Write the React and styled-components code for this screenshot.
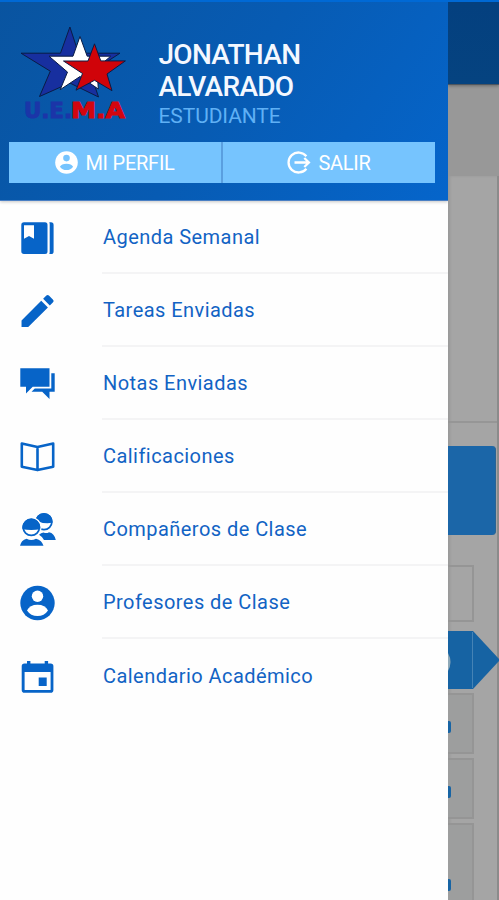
import React from "react";
import styled, { createGlobalStyle } from "styled-components";

const GlobalStyle = createGlobalStyle`
  * {
    box-sizing: border-box;
  }
  body {
    margin: 0;
    font-family: Roboto, "Liberation Sans", sans-serif;
  }
`;

const Screen = styled.div`
  width: 499px;
  height: 900px;
  display: flex;
  overflow: hidden;
  border-top: 2px solid #0069d5;
  background: #a5a5a5;
`;

const Drawer = styled.aside`
  width: 448px;
  flex-shrink: 0;
  display: flex;
  flex-direction: column;
  background: #fefefe;
`;

const Header = styled.header`
  height: 199px;
  padding: 0 13px 0 9px;
  background: linear-gradient(125deg, #0954a0 0%, #075bb3 50%, #0565cb 100%);
  border-bottom: 1px solid #4a7fc4;
  box-shadow: 0 1px 3px rgba(0, 0, 0, 0.22);
`;

const Profile = styled.div`
  height: 140px;
  display: flex;
`;

const Logo = styled.svg`
  width: 130px;
  height: 125px;
  margin-right: 19.5px;
`;

const Identity = styled.div`
  padding-top: 37px;
`;

const Name = styled.h1`
  margin: 0;
  font-size: 28px;
  font-weight: 500;
  line-height: 32px;
  color: #f4f8ff;
  letter-spacing: -0.7px;
`;

const Role = styled.div`
  font-size: 21px;
  line-height: 26px;
  letter-spacing: -0.1px;
  color: #5fb0f5;
`;

const Actions = styled.div`
  height: 41px;
  display: flex;
`;

const ActionButton = styled.button`
  flex: 1;
  display: flex;
  align-items: center;
  justify-content: center;
  gap: 7px;
  padding: 0;
  border: 0;
  border-right: ${(props) => (props.$divided ? "2px solid #5a9fdf" : "0")};
  background: #76c4fe;
  color: #fff;
  font-family: inherit;
  font-size: 20px;
  letter-spacing: -0.25px;
`;

const Menu = styled.nav`
  display: flex;
  flex-direction: column;
`;

const MenuItem = styled.a`
  height: 73px;
  display: flex;
  padding-left: 18px;
  color: #1263c4;
`;

const MenuIcon = styled.svg`
  width: 40px;
  height: 40px;
  margin: 16px 44px 0 0;
  overflow: visible;
  fill: #0764c8;
`;

const MenuLabel = styled.span`
  flex: 1;
  padding-left: 1px;
  border-bottom: ${(props) => (props.$last ? "0" : "2px solid #f4f4f5")};
  font-size: 20px;
  line-height: ${(props) => (props.$last ? 74 : 72)}px;
  letter-spacing: 0.45px;
`;

const Page = styled.main`
  flex: 1;
  min-width: 0;
  display: flex;
  flex-direction: column;
  background: #989898;
  overflow: hidden;
`;

const AppBar = styled.div`
  height: 83px;
  flex-shrink: 0;
  background: linear-gradient(#04407f, #054380);
  border-bottom: 1px solid #4e565f;
  box-shadow: 0 1px 3px rgba(0, 0, 0, 0.3);
`;

const PageBody = styled.div`
  flex: 1;
  width: 51px;
  margin-top: 91px;
  display: flex;
  flex-direction: column;
  background: #a5a5a5;
  border-right: 2px solid #8b8b8b;
  box-shadow: inset 2px 0 3px rgba(0, 0, 0, 0.08);
`;

const Banner = styled.div`
  height: 247px;
  flex-shrink: 0;
  border-bottom: 2px solid #969696;
`;

const Card = styled.div`
  height: 89px;
  flex-shrink: 0;
  margin: 23px 1px 30px 0;
  border-radius: 0 4px 4px 0;
  background: #1b66a8;
  border-right: 1px solid #2b6391;
`;

const Box = styled.div`
  width: 26px;
  height: ${(props) => props.$height}px;
  margin-bottom: ${(props) => props.$gap}px;
  padding-top: ${(props) => props.$dot || 0}px;
  flex-shrink: 0;
  border: 2px solid #959595;
  border-left: 0;
  background: ${(props) => (props.$filled ? "#9d9e9e" : "transparent")};
`;

const Dot = styled.div`
  width: 3px;
  height: 12px;
  border-radius: 0 2px 2px 0;
  background: #1764a4;
`;

const Arrow = styled.svg`
  width: 51px;
  height: 58px;
  margin-bottom: 4px;
  flex-shrink: 0;
`;

const items = [
  {
    label: "Agenda Semanal",
    icon: (
      <>
        <path
          fillRule="evenodd"
          d="M6 5.3h21a2.5 2.5 0 0 1 2.5 2.5v26.7a2.5 2.5 0 0 1-2.5 2.5H6a2.7 2.7 0 0 1-2.7-2.7V8A2.7 2.7 0 0 1 6 5.3zM6 8.3v13.5l5-2.8 5 2.8V8.3z"
        />
        <path d="M31.3 5.3H33a2.6 2.6 0 0 1 2.6 2.6v26.5A2.6 2.6 0 0 1 33 37h-1.7a5 5 0 0 0 .4-2V7.3a5 5 0 0 0-.4-2z" />
      </>
    ),
  },
  {
    label: "Tareas Enviadas",
    icon: (
      <path
        transform="translate(-1.8 -.3) scale(1.78)"
        d="M3 17.25V21h3.75L17.81 9.94l-3.75-3.75L3 17.25zM20.71 7.04a1 1 0 0 0 0-1.41l-2.34-2.34a1 1 0 0 0-1.41 0l-1.83 1.83 3.75 3.75 1.83-1.83z"
      />
    ),
  },
  {
    label: "Notas Enviadas",
    icon: (
      <>
        <path d="M2.3 5.3h29.2v18.4H14.7L8 30.5v-6.8H2.3z" />
        <path d="M33.3 10.3h3.4v18.4h-5.2V36l-7.3-7.3H13.5l3.3-3.2h16.5z" />
      </>
    ),
  },
  {
    label: "Calificaciones",
    icon: (
      <path
        fill="none"
        stroke="#0764c8"
        strokeWidth="2.6"
        strokeLinejoin="round"
        d="M19.5 11L3.8 7.6v23.2l15.7 3.3 15.7-3.3V7.6L19.5 11zV34"
      />
    ),
  },
  {
    label: "Compañeros de Clase",
    icon: (
      <>
        <circle cx="26" cy="12.8" r="7.9" fill="#fff" stroke="#0764c8" strokeWidth="1.7" />
        <path d="M17.5 14a8.6 8.6 0 1 1 17-0.2q-8 1.4-14-1.4z" />
        <path d="M21 25.8q2-1.9 4.5-2.4 3 1.5 5.5-.2 5.3 1 6.8 7.8H26q-1.3-3-5-5.2z" />
        <circle cx="13.3" cy="18.3" r="10.4" fill="#fff" />
        <circle cx="13.3" cy="18.3" r="8.1" fill="#fff" stroke="#0764c8" strokeWidth="1.7" />
        <path d="M4.4 20.2a9 9 0 1 1 17.8 0q-8.9 1.4-17.8 0z" />
        <path d="M2 36.8q1-5.4 6.6-7.1 4.7 2.7 9.4 0 6 1.7 7.5 7.1z" />
      </>
    ),
  },
  {
    label: "Profesores de Clase",
    icon: (
      <>
        <circle cx="19.5" cy="21" r="17.2" />
        <circle cx="19.5" cy="14.3" r="5.7" fill="#fff" />
        <path fill="#fff" d="M9 28.5q2.7-5.8 10.5-5.8T30 28.5q-3.7 5.5-10.5 5.5T9 28.5z" />
      </>
    ),
  },
  {
    label: "Calendario Académico",
    icon: (
      <path
        fillRule="evenodd"
        d="M9 6h3.4v2.4h14.3V6h3.4v2.4h2.5a2.8 2.8 0 0 1 2.8 2.8v23.7a2.8 2.8 0 0 1-2.8 2.8H6.5a2.8 2.8 0 0 1-2.8-2.8V11.2a2.8 2.8 0 0 1 2.8-2.8H9zM6.6 17v17.6a.5.5 0 0 0 .5.5h25a.5.5 0 0 0 .5-.5V17zM20.7 22.6h8v8.4h-8z"
      />
    ),
  },
];

const StarsLogo = () => (
  <Logo viewBox="9 2 130 125">
    <g stroke="#0a1b45" strokeWidth="1" strokeLinejoin="miter">
      <path
        fill="#172f9f"
        d="M69.9 27l8.6 26.2H120L90.3 72.5 98.5 97 69.8 83 39.5 96.5l10.8-25.3L21 53.2h39.5z"
      />
      <path
        fill="#fff"
        d="M80 36.5l7.2 19.7h23.5L97 68l1.3 21L80 76.5 60.2 89.7l7.3-17.6L49 56.2h24z"
      />
      <path
        fill="#d00309"
        d="M94.5 43.8l6.3 17.1h24.6L107 74l5 16.7-17.5-10.4L76 90.2l6.5-16.7L63.5 61H88z"
      />
    </g>
    <g fontFamily="DejaVu Sans" fontWeight="700" fontSize="22" strokeWidth="1">
      <text x="24" y="118" textLength="48" lengthAdjust="spacingAndGlyphs" fill="#1b35a8" stroke="#1b35a8">
        U.E.
      </text>
      <text x="71" y="118" textLength="54" lengthAdjust="spacingAndGlyphs" fill="#d3050f" stroke="#d3050f">
        M.A
      </text>
    </g>
  </Logo>
);

const UserIcon = () => (
  <svg width="23" height="23" viewBox="0 0 23 23">
    <circle cx="11.5" cy="11.5" r="11.3" fill="#fff" />
    <circle cx="11.5" cy="7.1" r="3.3" fill="#76c4fe" />
    <path fill="#76c4fe" d="M4.9 15.7q1.6-3 6.6-3t6.6 3q-2.4 3.4-6.6 3.4t-6.6-3.4z" />
  </svg>
);

const ExitIcon = () => (
  <svg width="24" height="23" viewBox="0 0 24 23" fill="none" stroke="#fff" strokeWidth="2.3">
    <path d="M19.4 5.3a10 10 0 1 0 0 12.4" />
    <path d="M7.5 11.5h14M17.3 7l4.6 4.5-4.6 4.5" />
  </svg>
);

const App = () => {
  return (
    <>
      <GlobalStyle />
      <Screen>
        <Drawer>
          <Header>
            <Profile>
              <StarsLogo />
              <Identity>
                <Name>
                  JONATHAN
                  <br />
                  ALVARADO
                </Name>
                <Role>ESTUDIANTE</Role>
              </Identity>
            </Profile>
            <Actions>
              <ActionButton $divided>
                <UserIcon />
                MI PERFIL
              </ActionButton>
              <ActionButton>
                <ExitIcon />
                SALIR
              </ActionButton>
            </Actions>
          </Header>
          <Menu>
            {items.map((item, index) => (
              <MenuItem key={item.label}>
                <MenuIcon viewBox="0 0 40 40">{item.icon}</MenuIcon>
                <MenuLabel $last={index === items.length - 1}>{item.label}</MenuLabel>
              </MenuItem>
            ))}
          </Menu>
        </Drawer>
        <Page>
          <AppBar />
          <PageBody>
            <Banner />
            <Card />
            <Box $height={57} $gap={9} />
            <Arrow viewBox="0 0 51 58">
              <path fill="#1663a3" d="M0 0h25l27 29-27 29H0z" />
              <path stroke="#4583b5" d="M24.5 1v56" />
              <path fill="#8fa9b8" d="M0 22q5 9 0 18z" />
            </Arrow>
            <Box $height={61} $gap={4} $dot={26} $filled>
              <Dot />
            </Box>
            <Box $height={61} $gap={4} $dot={26} $filled>
              <Dot />
            </Box>
            <Box $height={90} $gap={0} $dot={54} $filled>
              <Dot />
            </Box>
          </PageBody>
        </Page>
      </Screen>
    </>
  );
};

export default App;
